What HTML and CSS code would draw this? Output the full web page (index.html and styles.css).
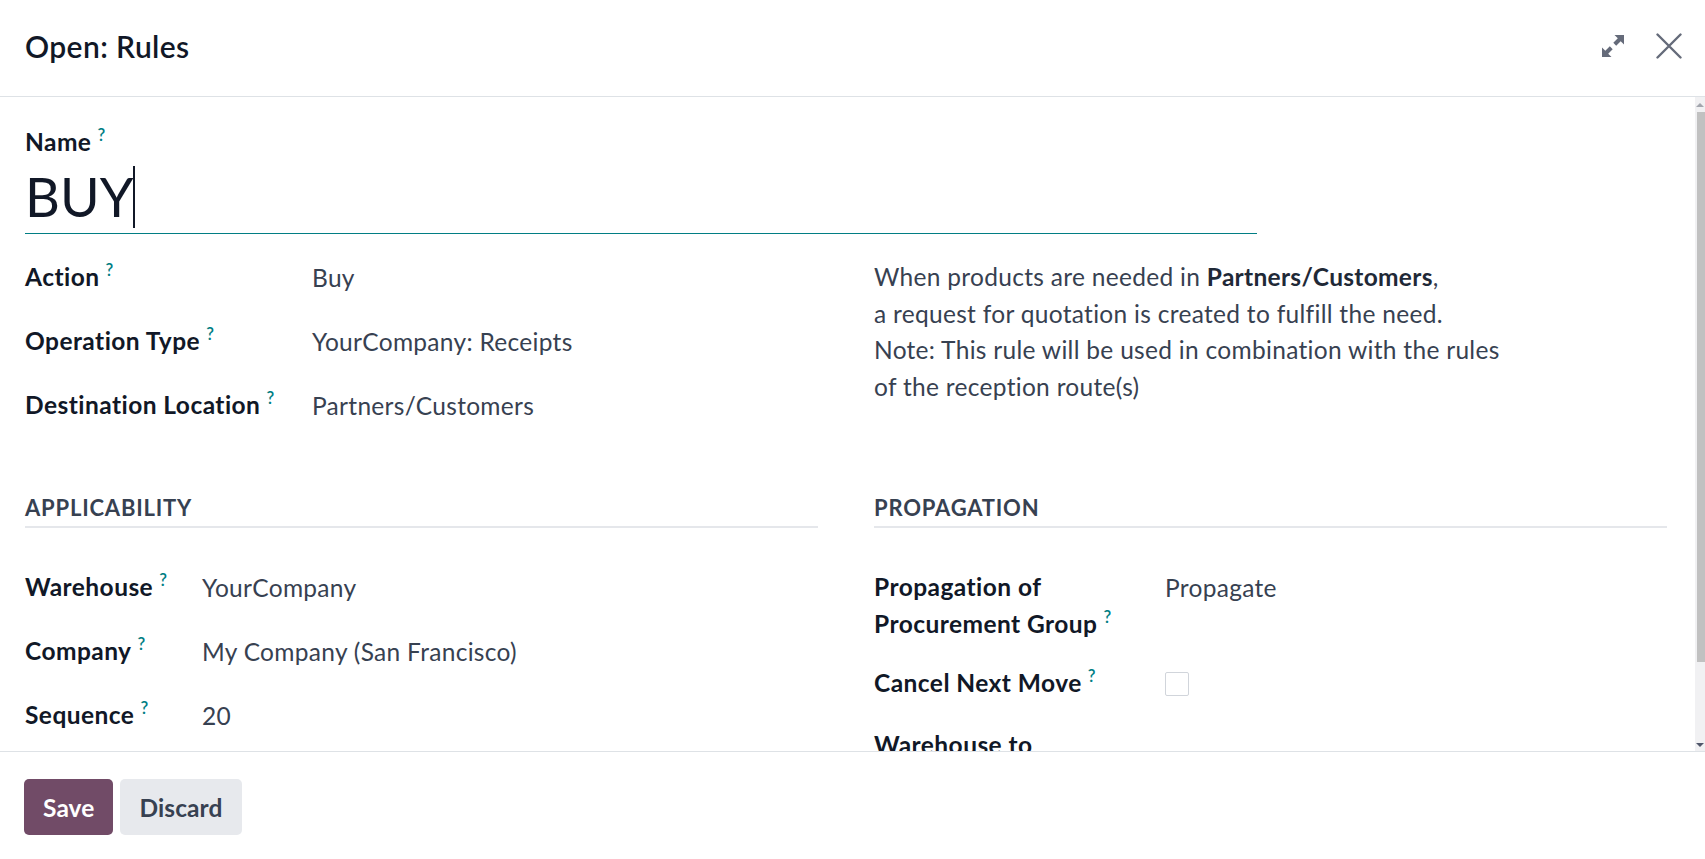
FILE: index.html
```html
<!DOCTYPE html>
<html lang="en">
<head>
    <meta charset="UTF-8">
    <meta name="viewport" content="width=device-width, initial-scale=1.0">
    <title>Open: Rules</title>
    <link rel="stylesheet" href="styles.css">
</head>
<body>
    <div class="modal">
        <header class="modal-header">
            <h4 class="modal-title">Open: Rules</h4>
            <div class="modal-actions">
                <button class="icon-btn" title="Maximize">
                    <svg class="icon-expand" width="22" height="22" viewBox="0 0 22 22">
                        <path d="M22 0 L22 9.5 L18.7 6.2 L14.2 10.7 L11.3 7.8 L15.8 3.3 L12.5 0 Z"/>
                        <path d="M0 22 L0 12.5 L3.3 15.8 L7.8 11.3 L10.7 14.2 L6.2 18.7 L9.5 22 Z"/>
                    </svg>
                </button>
                <button class="icon-btn" title="Close">
                    <svg class="icon-close" width="26" height="26" viewBox="0 0 26 26">
                        <path d="M1.5 1.5 L24.5 24.5 M24.5 1.5 L1.5 24.5"/>
                    </svg>
                </button>
            </div>
        </header>

        <div class="modal-main">
            <div class="modal-body">
                <div class="title-field">
                    <label class="field-label">Name<sup class="tip">?</sup></label>
                    <div class="name-input">BUY<span class="caret"></span></div>
                </div>

                <div class="form-row">
                    <div class="inner-group rule-group">
                        <label class="field-label">Action<sup class="tip">?</sup></label>
                        <div class="field-value">Buy</div>
                        <label class="field-label">Operation Type<sup class="tip">?</sup></label>
                        <div class="field-value">YourCompany: Receipts</div>
                        <label class="field-label">Destination Location<sup class="tip">?</sup></label>
                        <div class="field-value">Partners/Customers</div>
                    </div>
                    <div class="rule-message">
                        When products are needed in <b>Partners/Customers</b>,<br>
                        a request for quotation is created to fulfill the need.<br>
                        Note: This rule will be used in combination with the rules<br>
                        of the reception route(s)
                    </div>
                </div>

                <div class="form-row sections">
                    <div class="section">
                        <div class="separator">Applicability</div>
                        <div class="inner-group applicability-group">
                            <label class="field-label">Warehouse<sup class="tip">?</sup></label>
                            <div class="field-value">YourCompany</div>
                            <label class="field-label">Company<sup class="tip">?</sup></label>
                            <div class="field-value">My Company (San Francisco)</div>
                            <label class="field-label">Sequence<sup class="tip">?</sup></label>
                            <div class="field-value">20</div>
                        </div>
                    </div>
                    <div class="section">
                        <div class="separator">Propagation</div>
                        <div class="inner-group propagation-group">
                            <label class="field-label">Propagation of Procurement Group<sup class="tip">?</sup></label>
                            <div class="field-value">Propagate</div>
                            <label class="field-label">Cancel Next Move<sup class="tip">?</sup></label>
                            <div class="field-value"><span class="checkbox"></span></div>
                            <label class="field-label">Warehouse to Propagate<sup class="tip">?</sup></label>
                            <div class="field-value"></div>
                        </div>
                    </div>
                </div>
            </div>

            <!-- body scrollbar, content is taller than the dialog -->
            <div class="scrollbar">
                <div class="scroll-btn up"></div>
                <div class="scroll-thumb"></div>
                <div class="scroll-track"></div>
                <div class="scroll-btn down"></div>
            </div>
        </div>

        <footer class="modal-footer">
            <button class="btn btn-primary">Save</button>
            <button class="btn btn-secondary">Discard</button>
        </footer>
    </div>
</body>
</html>
```

FILE: styles.css
```css
* {
    box-sizing: border-box;
}

html,
body {
    margin: 0;
    height: 100%;
}

body {
    font-family: Lato, "Noto Sans", sans-serif;
    font-size: 24.5px;
    line-height: 36.75px;
    letter-spacing: 0.3px;
    color: #111827;
    background: #fff;
    overflow: hidden;
}

.modal {
    display: flex;
    flex-direction: column;
    height: 100vh;
}

/* header */

.modal-header {
    flex: none;
    height: 97px;
    display: flex;
    align-items: center;
    justify-content: space-between;
    padding: 0 23px 4px 25px;
    border-bottom: 1px solid #dee2e6;
}

.modal-title {
    margin: 0;
    font-size: 30px;
    font-weight: 600;
    letter-spacing: 0.4px;
    color: #111827;
}

.modal-actions {
    display: flex;
    align-items: center;
    gap: 32px;
}

.icon-btn {
    display: flex;
    padding: 0;
    border: none;
    background: none;
    cursor: pointer;
}

.icon-expand {
    fill: #656b7a;
}

.icon-close {
    fill: none;
    stroke: #656b7a;
    stroke-width: 2.4;
    stroke-linecap: round;
}

/* body */

.modal-main {
    flex: 1;
    display: flex;
    min-height: 0;
}

.modal-body {
    flex: 1;
    overflow: hidden;
    padding: 27px 28px 58px 25px;
}

.scrollbar {
    flex: none;
    width: 10px;
    display: flex;
    flex-direction: column;
    background: #f1f1f3;
}

.scroll-btn {
    flex: none;
    height: 15px;
    display: flex;
    justify-content: center;
    align-items: center;
}

.scroll-btn.down {
    height: 13px;
}

.scroll-btn.up::before {
    content: "";
    border-left: 4px solid transparent;
    border-right: 4px solid transparent;
    border-bottom: 4px solid #a3a6ae;
}

.scroll-btn.down::before {
    content: "";
    border-left: 4px solid transparent;
    border-right: 4px solid transparent;
    border-top: 4px solid #50566a;
}

.scroll-thumb {
    flex: none;
    height: 550px;
    margin-left: 2px;
    background: #c1c1c1;
}

.scroll-track {
    flex: 1;
}

/* name field */

.field-label {
    font-weight: 700;
    letter-spacing: 0.45px;
    color: #111827;
}

.tip {
    margin-left: 6px;
    font-size: 17px;
    line-height: 1;
    font-weight: 600;
    letter-spacing: 0;
    vertical-align: 10px;
    color: #017e84;
}

.title-field {
    display: flex;
    flex-direction: column;
    align-items: flex-start;
}

.name-input {
    display: flex;
    align-items: center;
    width: 75%;
    margin-top: 3px;
    padding-bottom: 3px;
    font-size: 54px;
    line-height: 66px;
    letter-spacing: 0;
    color: #111827;
    border-bottom: 1px solid #017e84;
}

.caret {
    width: 1.5px;
    height: 62px;
    margin-left: 0;
    background: #111827;
}

/* groups */

.form-row {
    display: grid;
    grid-template-columns: 1fr 1fr;
    column-gap: 56px;
    margin-top: 25px;
}

.form-row.sections {
    margin-top: 65px;
}

.inner-group {
    display: grid;
    row-gap: 24px;
    align-items: start;
}

.rule-group {
    grid-template-columns: 287px 1fr;
}

.applicability-group {
    grid-template-columns: 177px 1fr;
}

.propagation-group {
    grid-template-columns: 291px 1fr;
    row-gap: 22px;
}

.propagation-group .field-label {
    padding-right: 28px;
}

.field-value {
    min-height: 40px;
    padding-top: 1px;
    color: #374151;
}

.rule-message {
    color: #374151;
}

.rule-message b {
    font-weight: 700;
    color: #1f2937;
}

.separator {
    margin-bottom: 41px;
    padding-bottom: 3px;
    font-size: 22px;
    line-height: 31.5px;
    font-weight: 700;
    letter-spacing: 0.8px;
    text-transform: uppercase;
    color: #374151;
    border-bottom: 2px solid #e5e7eb;
}

.checkbox {
    display: block;
    width: 24px;
    height: 24px;
    margin-top: 6px;
    border: 1px solid #d1d5db;
    border-radius: 2px;
    background: #fff;
}

/* footer */

.modal-footer {
    flex: none;
    height: 108px;
    display: flex;
    align-items: flex-start;
    gap: 7px;
    padding: 27px 24px;
    border-top: 1px solid #dee2e6;
}

.btn {
    height: 56px;
    padding: 0 19px;
    border: none;
    border-radius: 5px;
    font-family: Lato, "Noto Sans", sans-serif;
    font-size: 24.5px;
    font-weight: 700;
    letter-spacing: 0.1px;
    cursor: pointer;
}

.btn-primary {
    background: #714b67;
    color: #fff;
}

.btn-secondary {
    background: #e7e9ed;
    color: #374151;
}
```
